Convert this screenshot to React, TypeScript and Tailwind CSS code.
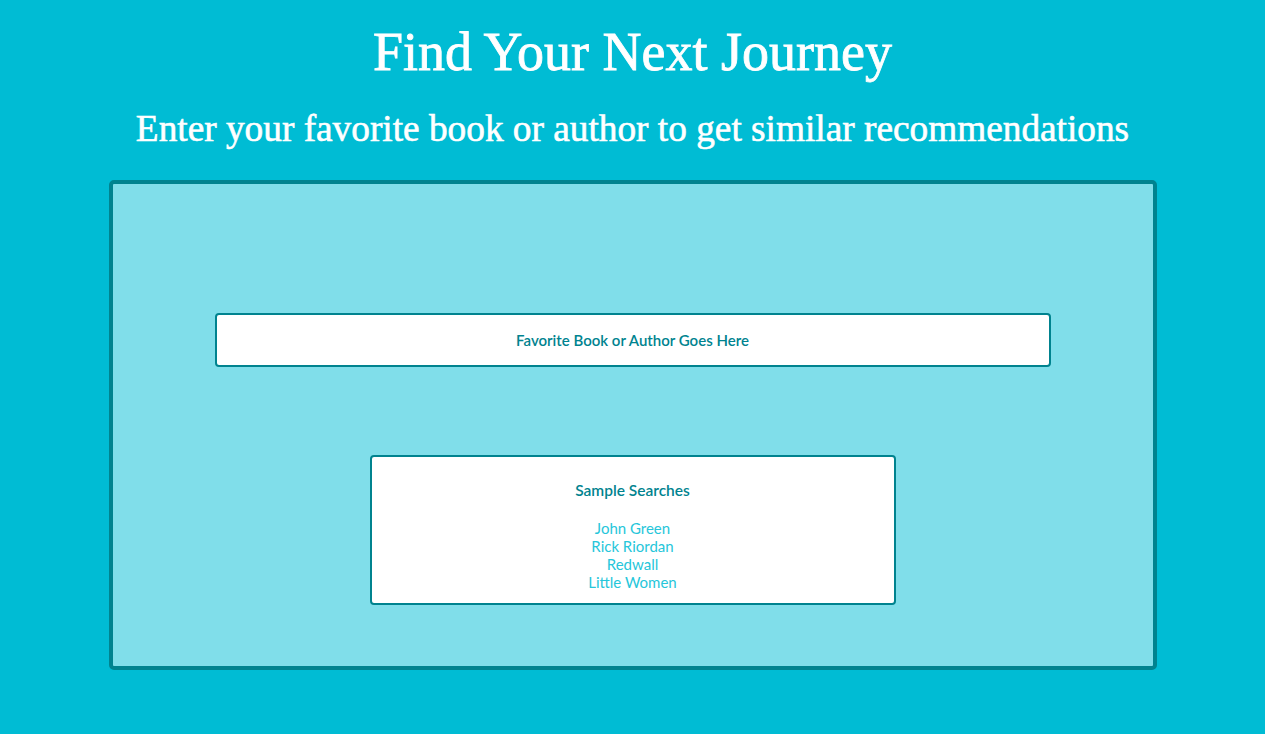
import React from 'react';

const samples = ['John Green', 'Rick Riordan', 'Redwall', 'Little Women'];

const serif = { fontFamily: '"Liberation Serif", "DejaVu Serif", serif' };

export default function App() {
  return (
    <div
      className="min-h-[734px] bg-[#00bcd4] flex flex-col items-center pt-[22px]"
      style={{ fontFamily: '"Lato", "Open Sans", sans-serif' }}
    >
      <h1 className="text-white text-[54px] leading-[60px] [-webkit-text-stroke:0.8px_white]" style={serif}>
        Find Your Next Journey
      </h1>
      <h2 className="text-white text-[37.3px] leading-[40px] mt-[27px] [-webkit-text-stroke:0.6px_white]" style={serif}>
        Enter your favorite book or author to get similar recommendations
      </h2>

      <div className="mt-[31px] w-[1048px] h-[490px] bg-[#80deea] border-4 border-[#00838f] rounded-[5px] flex flex-col items-center pt-[129px]">
        <div className="w-[836px] h-[54px] bg-white border-2 border-[#00838f] rounded-[4px] flex items-center justify-center">
          <span className="text-[#00838f] text-[15px] font-semibold">
            Favorite Book or Author Goes Here
          </span>
        </div>

        <div className="mt-[88px] w-[526px] h-[150px] bg-white border-2 border-[#00838f] rounded-[4px] flex flex-col items-center pt-[24px]">
          <div className="text-[#00838f] text-[15.5px] font-semibold leading-[18px]">Sample Searches</div>
          <ul className="mt-[20px] flex flex-col items-center">
            {samples.map((s) => (
              <li key={s} className="text-[#26c6da] text-[15px] leading-[18px]">
                {s}
              </li>
            ))}
          </ul>
        </div>
      </div>
    </div>
  );
}
